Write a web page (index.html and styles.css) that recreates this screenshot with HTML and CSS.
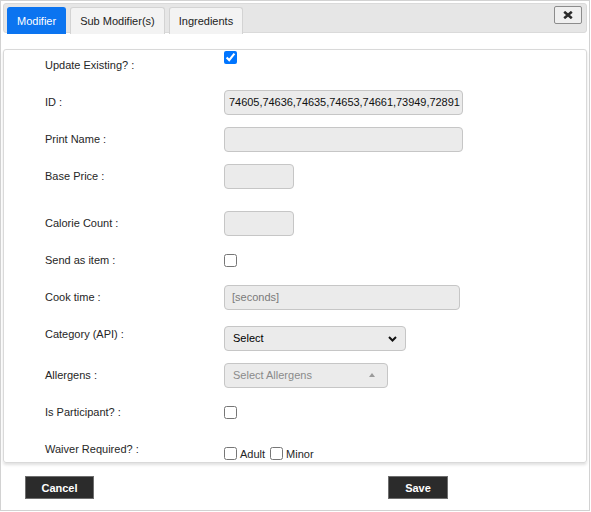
FILE: index.html
```html
<!DOCTYPE html>
<html lang="en">
<head>
<meta charset="utf-8">
<title>Modifier</title>
<link rel="stylesheet" href="styles.css">
</head>
<body>
<div class="dialog">
  <div class="tabbar">
    <nav class="tabs">
      <a class="tab active">Modifier</a>
      <a class="tab">Sub Modifier(s)</a>
      <a class="tab">Ingredients</a>
    </nav>
    <button class="close" type="button" aria-label="Close">
      <svg width="10" height="8" viewBox="0 0 10 8"><path d="M1.2 0.8 L8.8 7.2 M8.8 0.8 L1.2 7.2" stroke="#2a2a2a" stroke-width="2.6" stroke-linecap="butt"/></svg>
    </button>
  </div>

  <form class="panel">
    <div class="row">
      <label class="lbl">Update Existing? :</label>
      <div class="ctl-raised"><input type="checkbox" checked></div>
    </div>
    <div class="row">
      <label class="lbl">ID :</label>
      <input class="field w-full id-field" type="text" value="74605,74636,74635,74653,74661,73949,72891">
    </div>
    <div class="row">
      <label class="lbl">Print Name :</label>
      <input class="field w-full" type="text">
    </div>
    <div class="row">
      <label class="lbl">Base Price :</label>
      <input class="field w-short" type="text">
    </div>
    <div class="row row-spaced">
      <label class="lbl">Calorie Count :</label>
      <input class="field w-short" type="text">
    </div>
    <div class="row">
      <label class="lbl">Send as item :</label>
      <div><input type="checkbox"></div>
    </div>
    <div class="row">
      <label class="lbl">Cook time :</label>
      <input class="field w-cook" type="text" placeholder="[seconds]">
    </div>
    <div class="row">
      <label class="lbl">Category (API) :</label>
      <div class="select-wrap">
        <select class="field select">
          <option>Select</option>
        </select>
        <svg class="chevron" width="9" height="6" viewBox="0 0 9 6"><path d="M1 1 L4.5 4.5 L8 1" fill="none" stroke="#111" stroke-width="2"/></svg>
      </div>
    </div>
    <div class="row row-loose">
      <label class="lbl">Allergens :</label>
      <div class="field multi w-allergen">
        <span>Select Allergens</span>
        <span class="caret"></span>
      </div>
    </div>
    <div class="row">
      <label class="lbl">Is Participant? :</label>
      <div><input type="checkbox"></div>
    </div>
    <div class="row">
      <label class="lbl">Waiver Required? :</label>
      <div class="options">
        <label class="opt"><input type="checkbox"><span>Adult</span></label>
        <label class="opt"><input type="checkbox"><span>Minor</span></label>
      </div>
    </div>
  </form>

  <div class="footer">
    <button class="btn btn-cancel" type="button">Cancel</button>
    <button class="btn btn-save" type="button">Save</button>
  </div>
</div>
</body>
</html>
```
FILE: styles.css
```css
* {
  box-sizing: border-box;
}

body {
  margin: 0;
  background: #fff;
  font-family: "Liberation Sans", Arial, sans-serif;
  font-size: 11px;
  color: #262626;
}

.dialog {
  width: 590px;
  height: 511px;
  border: 1px solid #d2d2d2;
  padding: 2px;
  display: flex;
  flex-direction: column;
}

/* tab strip */
.tabbar {
  height: 30px;
  flex: none;
  display: flex;
  align-items: flex-start;
  padding: 3px 4px 0 3px;
  background: #e6e6e6;
  border: 1px solid #dadada;
  border-radius: 3px;
}

.tabs {
  display: flex;
  gap: 4px;
}

.tab {
  height: 27px;
  display: flex;
  align-items: center;
  padding: 0 9px;
  background: #f3f3f3;
  border: 1px solid #d3d3d3;
  border-bottom: 0;
  border-radius: 3px 3px 0 0;
  color: #222;
  cursor: pointer;
}

.tab.active {
  background: #0b74f0;
  border-color: #0b74f0;
  color: #fff;
}

.close {
  margin-left: auto;
  margin-top: -1px;
  width: 28px;
  height: 18px;
  padding: 0;
  display: flex;
  align-items: center;
  justify-content: center;
  background: #efefef;
  border: 1px solid #8c8c8c;
  border-radius: 2px;
}

/* form panel */
.panel {
  flex: none;
  margin: 16px 0 0;
  padding: 2px 0 0;
  border: 1px solid #d9d9d9;
  border-radius: 3px;
  box-shadow: 0 2px 3px rgba(0, 0, 0, 0.12);
}

.row {
  display: grid;
  grid-template-columns: 179px auto;
  grid-template-rows: 26px;
  align-items: center;
  height: 26px;
  padding-left: 41px;
}

.row + .row {
  margin-top: 11px;
}

.row + .row-spaced {
  margin-top: 21px;
}

.row + .row-loose {
  margin-top: 15px;
}

.lbl {
  line-height: 14px;
  color: #262626;
}

/* checkbox sits above the label's centre line */
.ctl-raised {
  margin: -8px 0 8px;
}

input[type="checkbox"] {
  display: block;
  margin: 0;
  width: 13px;
  height: 13px;
}

.field {
  height: 25px;
  padding: 0 5px;
  border: 1px solid #c6c6c6;
  border-radius: 4px;
  background: #ebebeb;
  font-family: "Liberation Sans", Arial, sans-serif;
  font-size: 11px;
  color: #111;
  outline: none;
}

.field::placeholder {
  color: #7a7a7a;
}

.id-field {
  padding: 0 1px 0 4px;
  letter-spacing: -0.04px;
}

.w-full { width: 239px; }
.w-short { width: 70px; }
.w-cook { width: 236px; padding-left: 7px; }
.w-allergen { width: 164px; }

.select-wrap {
  position: relative;
  width: 182px;
  margin: 4px 0 -4px;
}

.select {
  width: 100%;
  appearance: none;
  -webkit-appearance: none;
  padding-left: 8px;
  color: #000;
}

.chevron {
  position: absolute;
  right: 9px;
  top: 10px;
  pointer-events: none;
}

.multi {
  display: flex;
  align-items: center;
  justify-content: space-between;
  padding: 0 12px 0 8px;
  color: #8a8a8a;
}

.caret {
  width: 0;
  height: 0;
  border-left: 3px solid transparent;
  border-right: 3px solid transparent;
  border-bottom: 4px solid #9a9a9a;
}

.options {
  display: flex;
  align-items: center;
  margin: 4px 0 -4px;
}

.opt {
  display: flex;
  align-items: center;
  gap: 3px;
  margin-right: 5px;
  line-height: 14px;
}

.opt span {
  margin-top: 2px;
}

/* action buttons */
.footer {
  display: flex;
  gap: 294px;
  padding: 13px 0 0 22px;
}

.btn {
  height: 23px;
  padding: 0;
  background: #2b2b2b;
  border: 1px solid #6e6e6e;
  color: #fff;
  font-family: "Liberation Sans", Arial, sans-serif;
  font-size: 11px;
  font-weight: bold;
  cursor: pointer;
}

.btn-cancel { width: 69px; }
.btn-save { width: 60px; }
```
